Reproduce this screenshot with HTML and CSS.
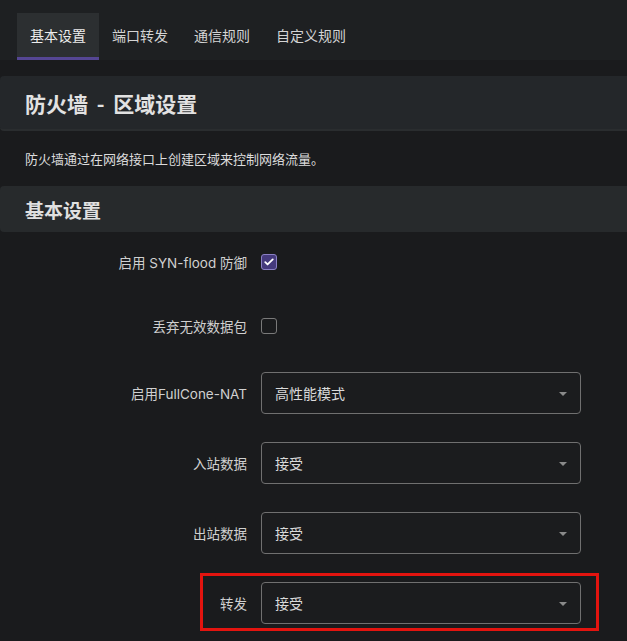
FILE: index.html
```html
<!DOCTYPE html>
<html lang="zh-CN">
<head>
<meta charset="utf-8">
<link rel="stylesheet" href="styles.css">
</head>
<body>
<nav class="tabs">
  <a class="tab active">基本设置</a>
  <a class="tab">端口转发</a>
  <a class="tab">通信规则</a>
  <a class="tab">自定义规则</a>
</nav>
<div class="page-head"><h2>防火墙 - 区域设置</h2></div>
<p class="desc">防火墙通过在网络接口上创建区域来控制网络流量。</p>
<div class="section-head"><h3>基本设置</h3></div>
<div class="form">
  <div class="row cb-row">
    <label class="lbl">启用 SYN-flood 防御</label>
    <span class="cb checked"><svg viewBox="0 0 16 16" width="12" height="12"><path d="M3 8.3l3.1 3L13 4.6" fill="none" stroke="#fff" stroke-width="2.4" stroke-linecap="round" stroke-linejoin="round"/></svg></span>
  </div>
  <div class="row cb-row">
    <label class="lbl">丢弃无效数据包</label>
    <span class="cb"></span>
  </div>
  <div class="row">
    <label class="lbl">启用FullCone-NAT</label>
    <div class="select">高性能模式<span class="caret"></span></div>
  </div>
  <div class="row">
    <label class="lbl">入站数据</label>
    <div class="select">接受<span class="caret"></span></div>
  </div>
  <div class="row">
    <label class="lbl">出站数据</label>
    <div class="select">接受<span class="caret"></span></div>
  </div>
  <div class="row marked">
    <label class="lbl">转发</label>
    <div class="select">接受<span class="caret"></span></div>
    <span class="redbox"></span>
  </div>
</div>
</body>
</html>
```
FILE: styles.css
```css
* { box-sizing: border-box; }
html, body { margin: 0; padding: 0; }
body {
  background: #1a1b1d;
  color: #d6d6d6;
  font-family: "Noto Sans", "Noto Sans CJK SC", sans-serif;
  width: 627px;
  height: 641px;
  overflow: hidden;
}
.tabs {
  display: flex;
  padding: 13px 0 0 17px;
  height: 60px;
  background: #1e2022;
}
.tab {
  display: flex;
  align-items: center;
  padding: 0 13px 3px 13px;
  height: 47px;
  font-size: 14px;
  color: #d4d4d4;
  font-family: "Noto Sans CJK SC", sans-serif;
}
.tab.active {
  background: #2c2f31;
  border-bottom: 3px solid #554693;
  padding-bottom: 0;
  color: #ececec;
}
.page-head {
  margin-top: 16px;
  height: 55px;
  background: #24272a;
  border-radius: 4px 0 0 4px;
  display: flex;
  align-items: center;
  padding-left: 25px;
  border-bottom: 2px solid #2a2d2f;
}
.page-head h2 {
  margin: 0;
  font-size: 21px;
  font-weight: 700;
  color: #e2e2e2;
  font-family: "Noto Sans CJK SC", sans-serif;
  word-spacing: 4px;
}
.desc {
  margin: 0;
  height: 55px;
  display: flex;
  align-items: center;
  padding-left: 25px;
  font-size: 13px;
  color: #dcdcdc;
  font-family: "Noto Sans CJK SC", sans-serif;
}
.section-head {
  height: 46px;
  background: #272a2c;
  border-radius: 4px 0 0 4px;
  display: flex;
  align-items: center;
  padding-left: 25px;
}
.section-head h3 {
  margin: 0;
  font-size: 19px;
  font-weight: 700;
  color: #e0e0e0;
  font-family: "Noto Sans CJK SC", sans-serif;
}
.form {
  display: flex;
  flex-direction: column;
  gap: 28px;
  padding-top: 12px;
}
.row {
  display: grid;
  grid-template-columns: 247px 320px;
  column-gap: 14px;
  align-items: center;
  height: 42px;
  position: relative;
}
.row.cb-row { height: 36px; }
.lbl {
  text-align: right;
  font-size: 13.5px;
  color: #d0d0d0;
  font-family: Inter, "Noto Sans CJK SC", sans-serif;
}
.cb {
  width: 16px;
  height: 16px;
  border: 1px solid #7a7a7a;
  border-radius: 3px;
  display: flex;
  align-items: center;
  justify-content: center;
}
.cb.checked {
  background: #453a7c;
  border-color: #8b80c4;
}
.select {
  height: 42px;
  border: 1px solid #707070;
  border-radius: 4px;
  background: #1b1c1e;
  display: flex;
  align-items: center;
  padding-left: 13px;
  font-size: 14px;
  color: #dadada;
  font-family: "Noto Sans CJK SC", sans-serif;
  position: relative;
}
.caret {
  position: absolute;
  right: 13px;
  top: 19px;
  width: 0;
  height: 0;
  border-left: 4px solid transparent;
  border-right: 4px solid transparent;
  border-top: 4px solid #8a8a8a;
}
.redbox {
  position: absolute;
  left: 200px;
  top: -9px;
  width: 399px;
  height: 58px;
  border: 3px solid #e3140f;
  pointer-events: none;
}
```
